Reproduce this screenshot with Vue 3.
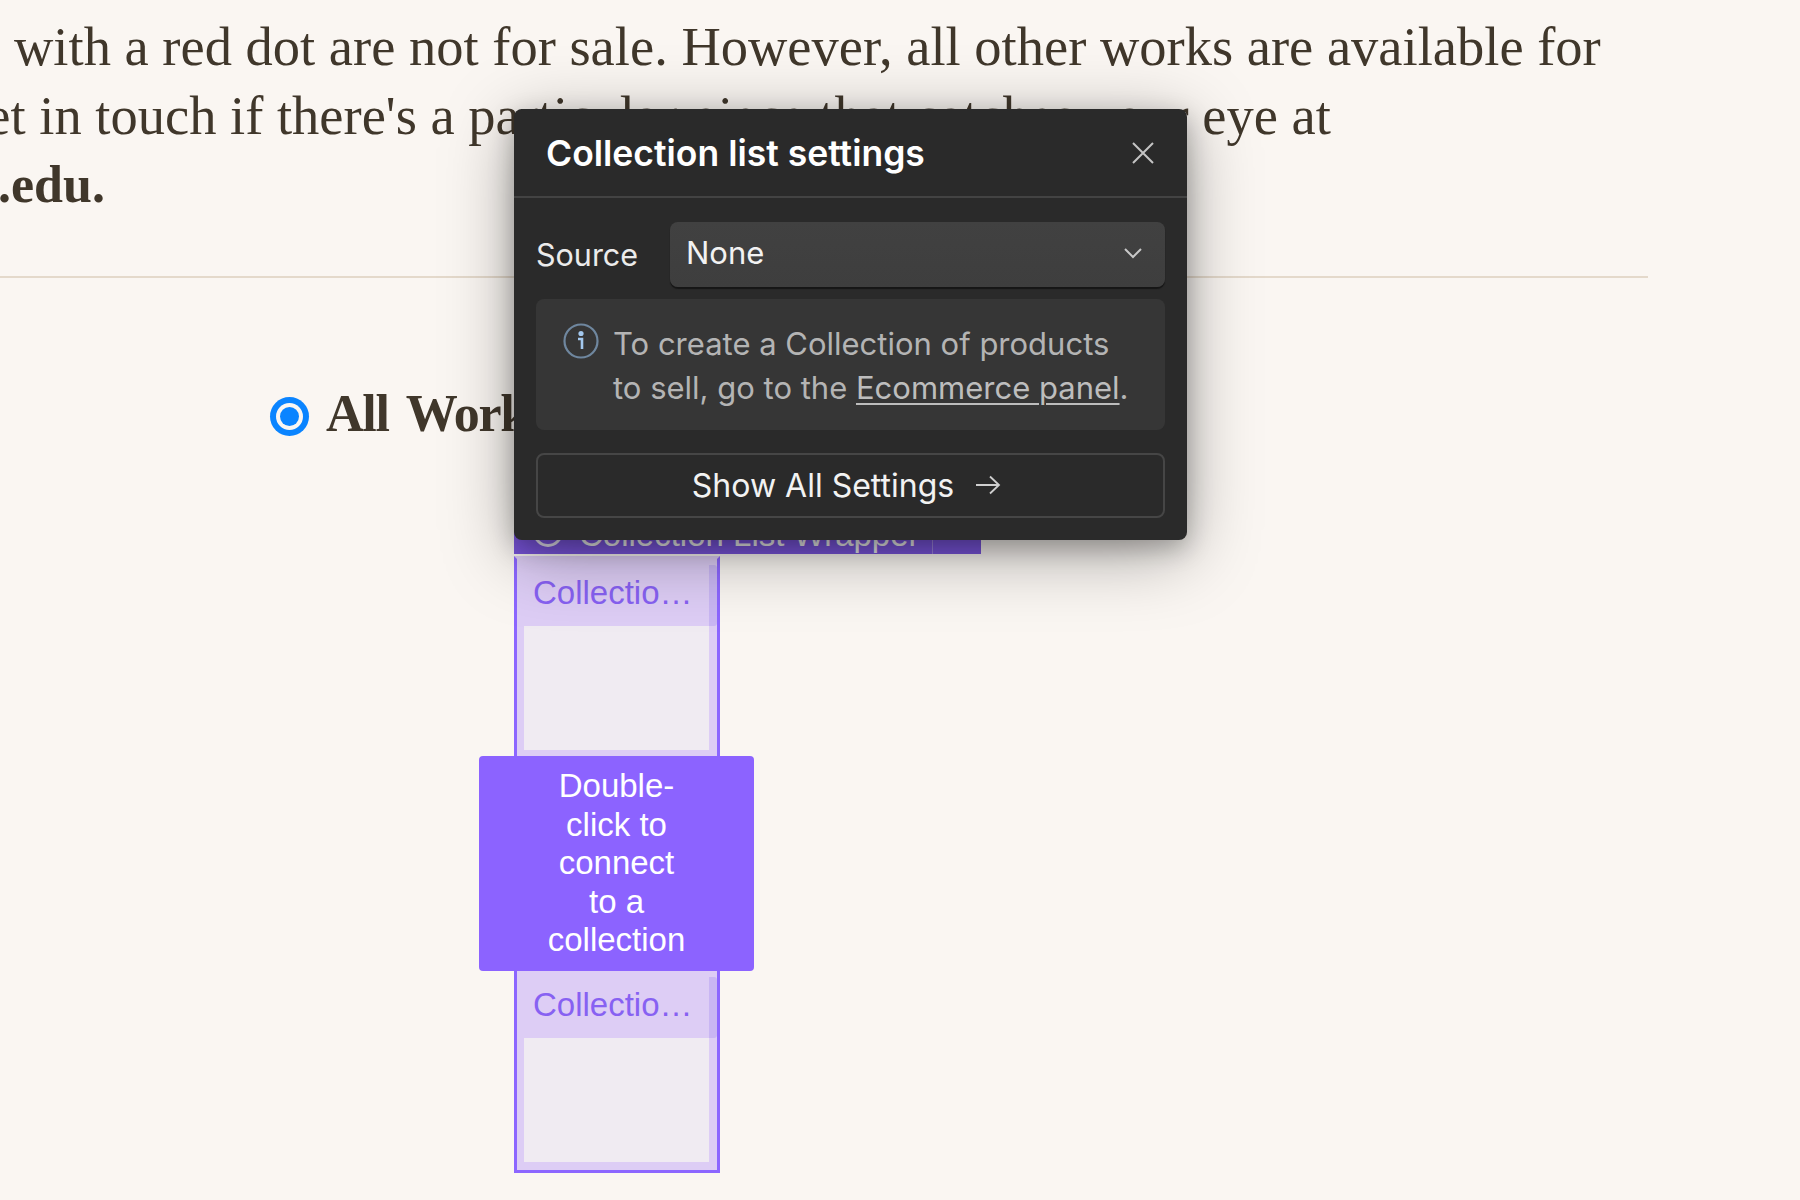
<script setup>
const lines = [
  { text: 'with a red dot are not for sale. However, all other works are available for', cls: 'l1' },
  { text: "Get in touch if there's a particular piece that catches your eye at", cls: 'l2' },
  { text: 'x.edu.', cls: 'l3' },
]
const items = ['Collection Item', 'Collection Item']
</script>

<template>
  <div class="page">
    <div class="copy">
      <div v-for="l in lines" :key="l.cls" class="line" :class="l.cls">{{ l.text }}</div>
    </div>
    <div class="rule"></div>
    <div class="filter">
      <span class="radio"><span class="dot"></span></span>
      <span class="filter-label">All Works</span>
    </div>
    <div class="list">
      <div class="wrap-tag">
        <span class="tag-circle"></span>
        <span class="tag-text">Collection List Wrapper</span>
        <span class="tag-sep"></span>
      </div>
      <div v-for="(it, i) in items" :key="i" class="item">
        <div class="item-label"><span class="item-text">{{ it }}</span><span class="item-bar"></span></div>
        <div class="item-body"></div>
      </div>
      <div class="hint">Double-click to connect to a collection</div>
    </div>

    <div class="popup">
      <div class="pop-head">
        <span class="pop-title">Collection list settings</span>
        <svg class="close" viewBox="0 0 24 24" fill="none" stroke="#c4c4c4" stroke-width="2"><path d="M2 2 L22 22 M22 2 L2 22"/></svg>
      </div>
      <div class="pop-body">
        <div class="source-row">
          <span class="source-label">Source</span>
          <div class="select">
            <span>None</span>
            <svg class="chev" viewBox="0 0 20 12" fill="none" stroke="#c8c8c8" stroke-width="2"><path d="M2 2 L10 10 L18 2"/></svg>
          </div>
        </div>
        <div class="info">
          <svg class="info-icon" viewBox="0 0 36 36" fill="none">
            <circle cx="18" cy="18" r="16.5" stroke="#6f879f" stroke-width="2.2"/>
            <circle cx="18" cy="10.5" r="2.6" fill="#a3c8ee"/>
            <path d="M15 16 H19 V26" stroke="#a3c8ee" stroke-width="2.6"/>
          </svg>
          <div class="info-text">To create a Collection of products<br>to sell, go to the <a class="link">Ecommerce panel</a>.</div>
        </div>
        <div class="show-all">
          <span>Show All Settings</span>
          <svg class="arrow" viewBox="0 0 26 20" fill="none" stroke="#cfcfcf" stroke-width="1.8"><path d="M1 10 H24 M15 1.5 L24 10 L15 18.5"/></svg>
        </div>
      </div>
    </div>
  </div>
</template>

<style>
html, body { margin: 0; padding: 0; background: #faf6f2; }
</style>

<style scoped>
.page {
  position: relative;
  width: 1800px;
  height: 1200px;
  overflow: hidden;
  background: #faf6f2;
  padding-top: 12px;
  box-sizing: border-box;
}
.copy { font-family: "Liberation Serif", serif; font-size: 54.5px; line-height: 69px; color: #40372b; white-space: nowrap; }
.line { height: 69px; }
.l1 { margin-left: 14px; }
.l2 { margin-left: -53px; }
.l3 { margin-left: -28px; font-weight: 700; font-size: 52px; }
.rule { width: 1648px; height: 2px; margin-top: 57px; background: #e4d9cb; }
.filter { display: flex; align-items: center; margin-top: 118px; margin-left: 270px; height: 40px; }
.radio {
  width: 39px; height: 39px; border-radius: 50%;
  background: #0a84ff; display: flex; align-items: center; justify-content: center; position: relative;
}
.radio::before { content: ""; position: absolute; inset: 6px; border-radius: 50%; background: #faf6f2; }
.dot { position: relative; width: 19px; height: 19px; border-radius: 50%; background: #0a84ff; }
.filter-label { margin-left: 17px; margin-bottom: 4px; font: 700 52px/1 "Liberation Serif", serif; letter-spacing: -1.2px; word-spacing: 6px; color: #40372b; white-space: nowrap; }
.list {
  position: relative;
  width: 206px; box-sizing: border-box;
  margin-top: 120px; margin-left: 514px;
  border: 3px solid #8c66ff;
  border-top-color: #ddcdf5;
  background: #ddcdf5;
  padding: 6px 0 8px 7px;
  height: 617px;
  font-family: "Liberation Sans", sans-serif;
}
.wrap-tag {
  position: absolute; left: -3px; bottom: calc(100% + 5px);
  width: 467px; height: 32px; background: #7a55dd;
  display: flex; align-items: center; color: #eee; font-size: 33px;
  box-sizing: border-box; padding-left: 19px;
}
.tag-circle { width: 24px; height: 24px; border: 3px solid #e4e0f0; border-radius: 50%; flex: none; margin-bottom: 12px; }
.tag-text { margin-left: 16px; margin-bottom: 6px; white-space: nowrap; }
.tag-sep { position: absolute; left: 418px; top: 0; bottom: 0; width: 1px; background: #9f85e2; }
.item + .item { margin-top: 227px; }
.item-label { position: relative; height: 61px; box-sizing: border-box; display: flex; align-items: center; padding: 0 0 6px 9px; }
.item-text { width: 164px; overflow: hidden; white-space: nowrap; text-overflow: ellipsis; color: #8761f2; font-size: 33px; }
.item-bar { position: absolute; right: 0; top: 0; bottom: 0; width: 8px; background: #c9b6f3; border-radius: 0 3px 3px 0; }
.item-body { height: 124px; width: 185px; background: #f0ebf2; }
.hint {
  position: absolute; left: -38px; top: 197px;
  width: 275px; height: 215px; box-sizing: border-box;
  padding: 11px 65px 0;
  background: #8c63ff; border-radius: 4px;
  color: #fff; font-size: 33px; line-height: 38.5px; text-align: center;
}
.popup {
  position: absolute; left: 514px; top: 109px; width: 673px; height: 431px;
  background: #2a2a2a; border-radius: 8px;
  box-shadow: 0 8px 24px rgba(0,0,0,.25), 0 14px 70px rgba(0,0,0,.34);
  font-family: Inter, sans-serif; color: #f2f2f2;
  display: flex; flex-direction: column;
}
.pop-head {
  height: 89px; box-sizing: border-box; border-bottom: 2px solid #434343;
  display: flex; align-items: center; justify-content: space-between;
  padding: 1px 33px 0 32px;
}
.pop-title { font-size: 35.5px; font-weight: 600; color: #fff; white-space: nowrap; }
.close { width: 24px; height: 24px; margin-right: -1px; }
.pop-body { padding: 24px 22px 0; }
.source-row { display: flex; align-items: center; }
.source-label { width: 134px; font-size: 30.5px; color: #ebebeb; }
.select {
  flex: 1; height: 65px; box-sizing: border-box;
  background: linear-gradient(#414141, #3e3e3e); border-radius: 8px; box-shadow: 0 2px 1px #161616;
  display: flex; align-items: center; justify-content: space-between;
  padding: 0 22px 4px 16px; font-size: 31px; color: #f2f2f2;
}
.chev { width: 20px; height: 12px; }
.info {
  margin-top: 12px; height: 131px; box-sizing: border-box;
  background: #363636; border-radius: 8px;
  display: flex; padding: 23px 0 0 27px;
}
.info-icon { width: 36px; height: 36px; flex: none; margin-top: 1px; }
.info-text { margin-left: 14px; font-size: 31px; line-height: 44px; color: #b4b4b4; white-space: nowrap; }
.link { color: #bdbdbd; text-decoration: underline; text-decoration-thickness: 2px; text-underline-offset: 4px; }
.show-all {
  margin-top: 23px; height: 65px; box-sizing: border-box;
  border: 2px solid #464646; border-radius: 8px;
  display: flex; align-items: center; justify-content: center;
  padding-right: 8px;
  font-size: 32px; color: #f2f2f2; gap: 21px;
}
.arrow { width: 26px; height: 20px; margin-bottom: 2px; }
</style>
